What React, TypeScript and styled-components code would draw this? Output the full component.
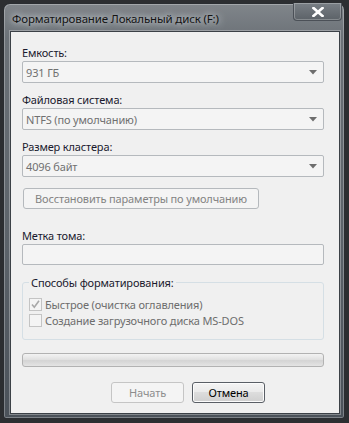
import * as React from 'react'
import styled, { createGlobalStyle } from 'styled-components'

const GlobalStyle = createGlobalStyle`
    html, body {
        margin: 0;
        padding: 0;
        background: #2c2e31;
    }
    body {
        font-family: "Noto Sans", "Open Sans", sans-serif;
        font-size: 11px;
        letter-spacing: -0.15px;
    }
`

const Arrow = () => (
    <svg width="8" height="5" viewBox="0 0 8 5">
        <path d="M0 0H8L4 4.5Z" fill="#6d6d6d" />
    </svg>
)

const Tick = () => (
    <svg width="11" height="11" viewBox="0 0 11 11">
        <path d="M2 5.5L4.3 8.2L9 1.8" fill="none" stroke="#a8a8a8" strokeWidth="1.6" />
    </svg>
)

const CloseGlyph = () => (
    <svg width="12" height="10" viewBox="0 0 12 10">
        <path d="M1.5 1L10.5 9M10.5 1L1.5 9" stroke="#fff" strokeWidth="2.6" strokeLinecap="square" />
    </svg>
)

interface FieldProps {
    label: string
    value: string
}

const ComboField = ({ label, value }: FieldProps) => (
    <Field>
        <Label>{label}</Label>
        <Combo>
            <span>{value}</span>
            <Arrow />
        </Combo>
    </Field>
)

export default () => (
    <>
        <GlobalStyle />
        <Window>
            <TitleBar>
                <Title>Форматирование Локальный диск (F:)</Title>
                <CloseButton><CloseGlyph /></CloseButton>
            </TitleBar>
            <Client>
                <ComboField label="Емкость:" value="931 ГБ" />
                <ComboField label="Файловая система:" value="NTFS (по умолчанию)" />
                <ComboField label="Размер кластера:" value="4096 байт" />
                <RestoreButton>Восстановить параметры по умолчанию</RestoreButton>
                <Field>
                    <Label>Метка тома:</Label>
                    <TextBox />
                </Field>
                <Group>
                    <Legend>Способы форматирования:</Legend>
                    <CheckRow>
                        <Box><Tick /></Box>
                        Быстрое (очистка оглавления)
                    </CheckRow>
                    <CheckRow>
                        <Box />
                        Создание загрузочного диска MS-DOS
                    </CheckRow>
                </Group>
                <Progress />
                <Buttons>
                    <PushButton disabled>Начать</PushButton>
                    <PushButton $primary>Отмена</PushButton>
                </Buttons>
            </Client>
        </Window>
    </>
)

const Window = styled.div`
    margin: 3px 4px 0 3px;
    width: 342px;
    height: 416px;
    box-sizing: border-box;
    border: 1px solid #2a2d31;
    border-radius: 7px 7px 3px 3px;
    background: linear-gradient(180deg, #80858a 0%, #6c7278 8%, #5b6269 60%, #4b525a 100%);
    box-shadow: inset 0 0 0 1px rgba(255, 255, 255, 0.28);
    padding: 0 4px 4px 6px;
    display: flex;
    flex-direction: column;
`

const TitleBar = styled.div`
    height: 27px;
    display: flex;
    align-items: flex-start;
`

const Title = styled.div`
    margin: 7px 0 0 2px;
    color: #141414;
    font-size: 11.5px;
    line-height: 15px;
    text-shadow: 0 0 6px rgba(235, 240, 245, 0.9), 0 0 10px rgba(235, 240, 245, 0.6);
`

const CloseButton = styled.div`
    margin: -1px -2px 0 auto;
    width: 49px;
    height: 18px;
    box-sizing: border-box;
    border: 1px solid #4b5057;
    border-top: none;
    border-radius: 0 0 4px 4px;
    background: linear-gradient(180deg, #7a8086 0%, #6a7076 50%, #5c6268 100%);
    box-shadow: inset 0 0 0 1px rgba(255, 255, 255, 0.25);
    display: flex;
    align-items: center;
    justify-content: center;
`

const Client = styled.div`
    flex: 1;
    box-sizing: border-box;
    background: #f0f0f0;
    border: 1px solid #3c4147;
    box-shadow: 0 0 0 1px rgba(255, 255, 255, 0.3);
    padding: 13px 15px 0 11px;
    display: flex;
    flex-direction: column;
    color: #1a1a2e;
`

const Field = styled.div`
    display: flex;
    flex-direction: column;
    margin-bottom: 9px;
`

const Label = styled.div`
    line-height: 15px;
    height: 15px;
    margin-bottom: 1px;
`

const Combo = styled.div`
    height: 22px;
    box-sizing: border-box;
    border: 1px solid #b5b9bd;
    border-radius: 2px;
    background: #f4f4f4;
    color: #707070;
    padding: 0 6px 0 3px;
    display: flex;
    align-items: center;
    justify-content: space-between;
`

const RestoreButton = styled.div`
    margin: 2px 0 19px 1px;
    width: 236px;
    height: 21px;
    box-sizing: border-box;
    border: 1px solid #b5b9bd;
    border-radius: 3px;
    background: #f4f4f4;
    color: #838383;
    display: flex;
    align-items: center;
    justify-content: center;
`

const TextBox = styled.div`
    height: 21px;
    box-sizing: border-box;
    border: 1px solid #b5b9bd;
    border-radius: 2px;
    background: #f4f4f4;
`

const Group = styled.div`
    position: relative;
    margin-top: 8px;
    height: 58px;
    box-sizing: border-box;
    border: 1px solid #d5dfe5;
    border-radius: 3px;
    padding: 15px 0 0 6px;
    display: flex;
    flex-direction: column;
    gap: 3px;
`

const Legend = styled.div`
    position: absolute;
    top: -8px;
    left: 6px;
    padding: 0 2px;
    background: #f0f0f0;
    line-height: 15px;
`

const CheckRow = styled.div`
    display: flex;
    align-items: center;
    gap: 3px;
    color: #6d6d6d;
    line-height: 13px;
`

const Box = styled.div`
    width: 13px;
    height: 13px;
    box-sizing: border-box;
    border: 1px solid #c4c4c4;
    background: #f4f4f4;
    display: flex;
    align-items: center;
    justify-content: center;
`

const Progress = styled.div`
    margin-top: 13px;
    height: 14px;
    box-sizing: border-box;
    border: 1px solid #b2b2b2;
    border-radius: 3px;
    background: linear-gradient(180deg, #f3f3f3 0%, #e2e2e2 45%, #d4d4d4 55%, #e4e4e4 100%);
`

const Buttons = styled.div`
    margin: 15px 0 0 89px;
    display: flex;
    gap: 8px;
`

const PushButton = styled.div<{ $primary?: boolean; disabled?: boolean }>`
    flex: none;
    width: 73px;
    height: 21px;
    box-sizing: border-box;
    border-radius: 3px;
    display: flex;
    align-items: center;
    justify-content: center;
    border: 1px solid ${p => (p.$primary ? '#5a5f66' : '#c5c5c5')};
    color: ${p => (p.$primary ? '#000' : '#8d8d8d')};
    background: ${p =>
        p.$primary
            ? 'linear-gradient(180deg, #f4f4f4 0%, #ebebeb 45%, #dddddd 50%, #cfcfcf 100%)'
            : '#f4f4f4'};
    box-shadow: ${p => (p.$primary ? 'inset 0 0 0 1px #fcfcfc' : 'none')};
`
